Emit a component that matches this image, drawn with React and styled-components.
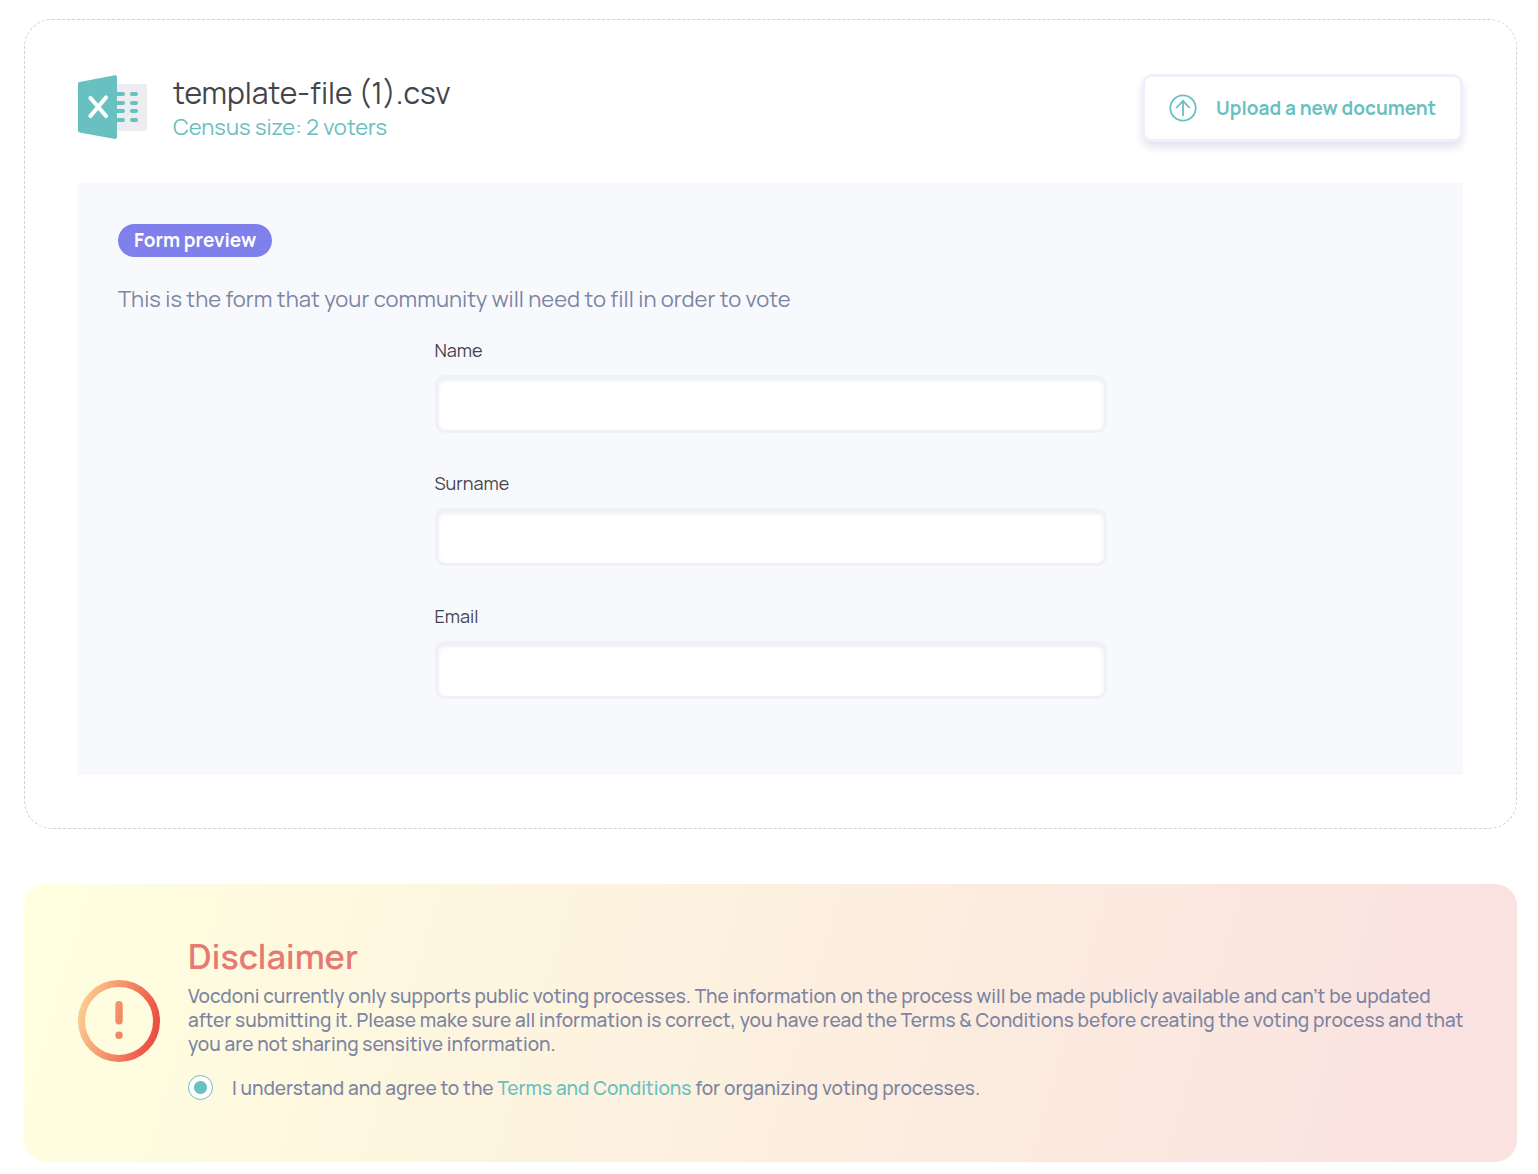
import React, { useState } from 'react';
import styled, { createGlobalStyle } from 'styled-components';

const teal = '#69c0c1';
const slate = '#7c85a2';
const ink = '#44444b';

const GlobalStyle = createGlobalStyle`
  *, *::before, *::after { box-sizing: border-box; }
  body {
    margin: 0;
    background: #fff;
    color: ${ink};
    font-family: Manrope, Inter, 'Liberation Sans', sans-serif;
  }
  h1, h2, p { margin: 0; font-weight: 400; }
`;

const Page = styled.main`
  display: flex;
  flex-direction: column;
  gap: 55px;
  padding: 19px 21px 12px 24px;
`;

const FileCard = styled.section`
  padding: 54px 53px 53px;
  border: 1px dashed #d0d0d9;
  border-radius: 28px;
`;

const FileHeader = styled.header`
  display: flex;
  justify-content: space-between;
  align-items: center;
  margin-bottom: 41px;
`;

const FileInfo = styled.div`
  display: flex;
  align-items: center;
  gap: 26px;
`;

const FileName = styled.h1`
  font-size: 30px;
  line-height: 38px;
`;

const CensusSize = styled.p`
  font-size: 22px;
  line-height: 30px;
  color: ${teal};
`;

const UploadButton = styled.button`
  display: flex;
  align-items: center;
  gap: 19px;
  height: 68px;
  padding: 0 24px;
  border: 3px solid #f0f0f8;
  border-radius: 10px;
  background: #fff;
  box-shadow: 0 6px 8px #e2e5f4;
  color: ${teal};
  font: 700 19px/24px Manrope, Inter, sans-serif;
  cursor: pointer;
`;

const Preview = styled.section`
  padding: 41px 40px 76px;
  background: #f8f9fd;
`;

const Badge = styled.span`
  display: inline-block;
  padding: 0 16px;
  border-radius: 17px;
  background: #7f80eb;
  color: #fff;
  font-size: 19px;
  font-weight: 700;
  line-height: 33px;
`;

const PreviewText = styled.p`
  margin-top: 26px;
  font-size: 22px;
  line-height: 32px;
  color: ${slate};
`;

const Form = styled.form`
  display: flex;
  flex-direction: column;
  gap: 38px;
  max-width: 672px;
  margin: 23px auto 0;
`;

const Field = styled.label`
  display: flex;
  flex-direction: column;
  gap: 13px;
  font-size: 18px;
  line-height: 24px;
`;

const TextInput = styled.input`
  width: 100%;
  height: 58px;
  padding: 0 16px;
  border: 3px solid #f0f1f7;
  border-radius: 10px;
  background: #fff;
  box-shadow: inset 0 2px 4px #e9ebf5;
  color: ${ink};
  font: inherit;
`;

const Disclaimer = styled.section`
  display: flex;
  align-items: center;
  gap: 28px;
  padding: 54px 48px 58px 54px;
  border-radius: 22px;
  background: linear-gradient(106deg, #ffffdf 0%, #fae2e0 94%);
`;

const DisclaimerBody = styled.div`
  flex: 1;
  padding-bottom: 4px;
  color: ${slate};
  font-size: 19px;
  line-height: 24px;
  p, label { font-weight: 500; }
`;

const DisclaimerTitle = styled.h2`
  margin-bottom: 10px;
  color: #e77975;
  font-size: 34px;
  font-weight: 600;
  line-height: 36px;
`;

const Agreement = styled.div`
  display: flex;
  align-items: center;
  gap: 19px;
  margin-top: 19px;
`;

const AgreeRadio = styled.input`
  appearance: none;
  width: 25px;
  height: 25px;
  margin: 0;
  border: 1px solid ${teal};
  border-radius: 50%;
  background: #fff;
  &:checked {
    background: radial-gradient(circle, ${teal} 6px, #fff 7px);
  }
`;

const TermsLink = styled.a`
  color: ${teal};
  text-decoration: none;
`;

const Icon = styled.svg`
  flex: none;
  display: block;
`;

function SpreadsheetIcon() {
  return (
    <Icon width="69" height="66" viewBox="0 0 69 66" aria-hidden="true">
      <rect x="34" y="9" width="35" height="47" rx="2" fill="#ecedf0" />
      <path
        d="M37 19h8M37 28h8M37 36h8M37 45h8M54 19h4M54 28h4M54 36h4M54 45h4"
        stroke={teal}
        strokeWidth="4"
        strokeLinecap="round"
      />
      <path d="M1.5 7 37 0.2Q39 0 39 2v60q0 2-2 2L1.5 57.500Q0 57 0 55.500V8.500Q0 7.300 1.500 7Z" fill={teal} />
      <path d="m12.500 23 15.500 18M28 22.500l-15.500 18.500" stroke="#fff" strokeWidth="4.200" strokeLinecap="round" />
    </Icon>
  );
}

function UploadIcon() {
  return (
    <Icon width="28" height="28" viewBox="0 0 28 28" fill="none" stroke={teal} strokeWidth="1.8" aria-hidden="true">
      <circle cx="14" cy="14" r="12.700" />
      <path d="M14 22V6.800M7.300 14 14 6.800l6.700 7.200" />
    </Icon>
  );
}

function WarningIcon() {
  return (
    <Icon width="82" height="82" viewBox="0 0 82 82" fill="none" aria-hidden="true">
      <defs>
        <linearGradient id="warning" gradientUnits="userSpaceOnUse" x1="2" y1="30" x2="81" y2="50">
          <stop offset="0" stopColor="#fbcb90" />
          <stop offset="1" stopColor="#ec4a3e" />
        </linearGradient>
      </defs>
      <circle cx="41" cy="41" r="37.500" stroke="url(#warning)" strokeWidth="7" />
      <rect x="37.300" y="21" width="7.400" height="23.500" rx="3.700" fill="url(#warning)" />
      <circle cx="41" cy="55.300" r="3.700" fill="url(#warning)" />
    </Icon>
  );
}

const fields = ['Name', 'Surname', 'Email'];

export default function App() {
  const [agreed, setAgreed] = useState(true);

  return (
    <>
      <GlobalStyle />
      <Page>
        <FileCard>
          <FileHeader>
            <FileInfo>
              <SpreadsheetIcon />
              <div>
                <FileName>template-file (1).csv</FileName>
                <CensusSize>Census size: 2 voters</CensusSize>
              </div>
            </FileInfo>
            <UploadButton type="button">
              <UploadIcon />
              Upload a new document
            </UploadButton>
          </FileHeader>
          <Preview>
            <Badge>Form preview</Badge>
            <PreviewText>This is the form that your community will need to fill in order to vote</PreviewText>
            <Form>
              {fields.map((name) => (
                <Field key={name}>
                  {name}
                  <TextInput type={name === 'Email' ? 'email' : 'text'} name={name.toLowerCase()} />
                </Field>
              ))}
            </Form>
          </Preview>
        </FileCard>
        <Disclaimer>
          <WarningIcon />
          <DisclaimerBody>
            <DisclaimerTitle>Disclaimer</DisclaimerTitle>
            <p>
              Vocdoni currently only supports public voting processes. The information on the process will be made
              publicly available and can’t be updated after submitting it. Please make sure all information is correct,
              you have read the Terms &amp; Conditions before creating the voting process and that you are not sharing
              sensitive information.
            </p>
            <Agreement>
              <AgreeRadio id="agree" type="radio" checked={agreed} onChange={() => setAgreed(true)} />
              <label htmlFor="agree">
                I understand and agree to the <TermsLink href="#terms">Terms and Conditions</TermsLink> for organizing
                voting processes.
              </label>
            </Agreement>
          </DisclaimerBody>
        </Disclaimer>
      </Page>
    </>
  );
}
